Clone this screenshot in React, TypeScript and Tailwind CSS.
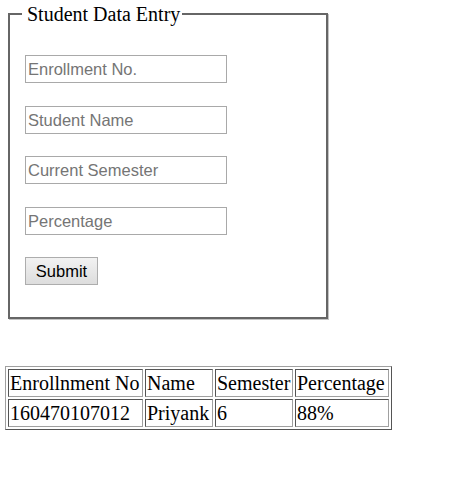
const fields = ['Enrollment No.', 'Student Name', 'Current Semester', 'Percentage'];
const gaps = ['mt-0', 'mt-[23px]', 'mt-[22px]', 'mt-[23px]'];

const headers = ['Enrollnment No', 'Name', 'Semester', 'Percentage'];
const row = ['160470107012', 'Priyank', '6', '88%'];
const widths = ['w-[135px]', 'w-[68px]', 'w-[78px]', 'w-[94px]'];

function Cell({ children, className = '' }: { children: React.ReactNode; className?: string }) {
  return (
    <td
      className={`${className} border border-t-[#555555] border-l-[#555555] border-r-[#a0a0a0] border-b-[#a0a0a0] p-[1px] text-left align-middle leading-[24px] whitespace-nowrap`}
    >
      {children}
    </td>
  );
}

export default function App() {
  return (
    <div className="min-h-[504px] w-[459px] bg-white font-['Liberation_Serif',serif] text-black">
      <div className="pl-[8px] pt-[3px]">
        <fieldset className="w-[320px] border-2 border-[#666666] px-[12px] pb-[32px] shadow-[1px_1px_0_#c4c4c4]">
          <legend className="pl-[5px] pr-[2px] text-[20px] leading-[22px]">Student Data Entry</legend>
          <div className="ml-[3px] mt-[30px] flex flex-col items-start font-['Liberation_Sans',Arial,sans-serif]">
            {fields.map((f, i) => (
              <input
                key={f}
                type="text"
                placeholder={f}
                className={`${gaps[i]} h-[28px] w-[202px] border border-[#a9a9a9] bg-white px-[2px] text-[16.5px] text-black placeholder:text-[#757575] outline-none`}
              />
            ))}
            <button
              type="button"
              className="mt-[22px] h-[28px] w-[73px] border border-[#adadad] bg-gradient-to-b from-[#f2f2f2] to-[#dddddd] text-[16.5px] text-black"
            >
              Submit
            </button>
          </div>
        </fieldset>
      </div>

      <div className="mt-[47px] pl-[5px]">
        <table className="border-separate border-spacing-[2px] border border-t-[#a0a0a0] border-l-[#a0a0a0] border-r-[#555555] border-b-[#555555] text-[20px]">
          <tbody>
            <tr>
              {headers.map((h, i) => (
                <Cell key={h} className={widths[i]}>
                  {h}
                </Cell>
              ))}
            </tr>
            <tr>
              {row.map((c) => (
                <Cell key={c}>{c}</Cell>
              ))}
            </tr>
          </tbody>
        </table>
      </div>
    </div>
  );
}
